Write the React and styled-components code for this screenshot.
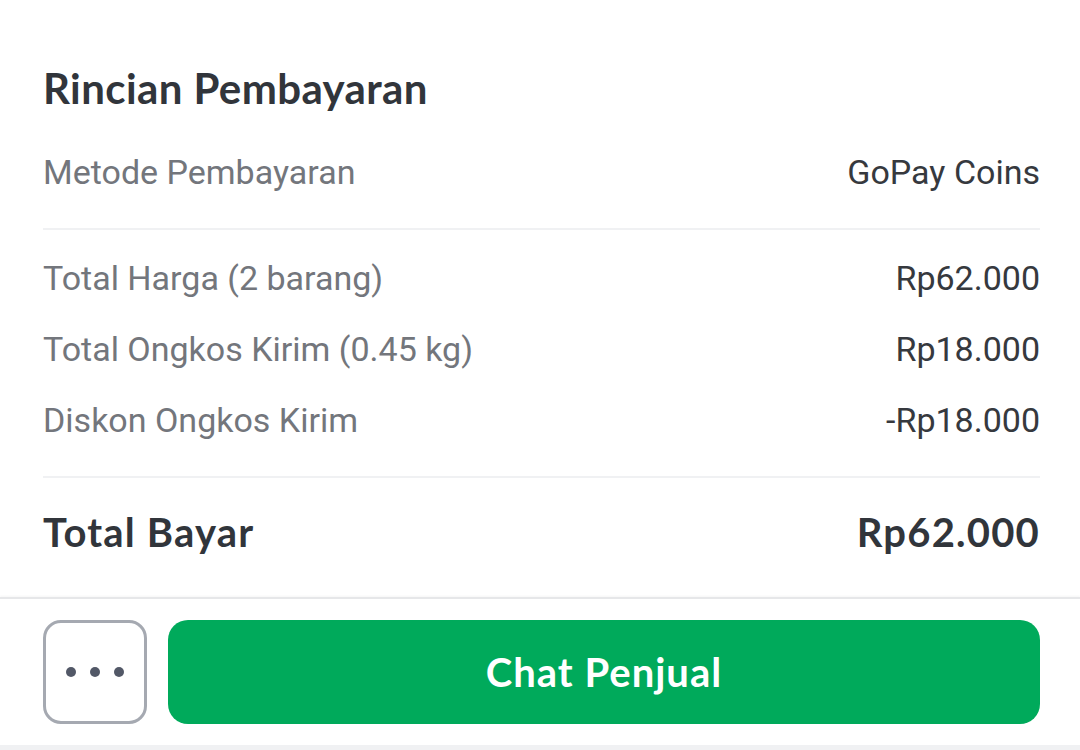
import React from 'react';
import styled, { createGlobalStyle } from 'styled-components';

const GlobalStyle = createGlobalStyle`
  html, body {
    margin: 0;
    padding: 0;
    background: #ffffff;
  }
  * { box-sizing: border-box; }
`;

const Page = styled.div`
  width: 1080px;
  height: 750px;
  display: flex;
  flex-direction: column;
  background: #ffffff;
  overflow: hidden;
`;

const Content = styled.div`
  padding: 0 40px 0 43px;
  display: flex;
  flex-direction: column;
`;

const Title = styled.h2`
  margin: 0;
  padding-top: 64px;
  line-height: 48px;
  font-family: Lato, "Noto Sans", sans-serif;
  font-weight: 700;
  font-size: 42px;
  letter-spacing: 0.4px;
  color: #31353b;
`;

const InfoRow = styled.div`
  height: 71px;
  margin-top: ${(p) => p.$gap || 0}px;
  display: flex;
  align-items: center;
  justify-content: space-between;
`;

const Label = styled.span`
  font-family: Roboto, "Liberation Sans", sans-serif;
  font-size: 34px;
  color: #73767c;
`;

const Value = styled.span`
  font-family: Roboto, "Liberation Sans", sans-serif;
  font-size: 34px;
  color: #36393e;
`;

const TotalText = styled.span`
  font-family: Lato, "Noto Sans", sans-serif;
  font-weight: 700;
  font-size: 40px;
  letter-spacing: 1.2px;
  color: #31353b;
`;

const Divider = styled.div`
  height: 2px;
  margin-top: 21px;
  background: #f0f1f3;
`;

const Footer = styled.div`
  margin-top: 30px;
  border-top: 2px solid #e6e7e9;
  box-shadow: 0 -1px 2px rgba(0, 0, 0, 0.04);
  padding: 21px 40px 21px 43px;
  display: flex;
  gap: 21px;
`;

const MoreButton = styled.button`
  width: 104px;
  height: 104px;
  flex-shrink: 0;
  border: 3px solid #a5a9b1;
  border-radius: 18px;
  background: #ffffff;
  display: flex;
  align-items: center;
  justify-content: center;
  gap: 14px;
  padding: 0;
`;

const Dot = styled.span`
  width: 10px;
  height: 10px;
  border-radius: 50%;
  background: #525867;
`;

const ChatButton = styled.button`
  flex: 1;
  height: 104px;
  border: none;
  border-radius: 20px;
  background: #00aa5b;
  color: #ffffff;
  font-family: Lato, "Noto Sans", sans-serif;
  font-weight: 700;
  font-size: 40px;
  letter-spacing: 1px;
`;

const BottomStrip = styled.div`
  flex: 1;
  background: #f0f1f3;
`;

const details = [
  { label: 'Total Harga (2 barang)', value: 'Rp62.000' },
  { label: 'Total Ongkos Kirim (0.45 kg)', value: 'Rp18.000' },
  { label: 'Diskon Ongkos Kirim', value: '-Rp18.000' },
];

export default function App() {
  return (
    <Page>
      <GlobalStyle />
      <Content>
        <Title>Rincian Pembayaran</Title>
        <InfoRow $gap={24}>
          <Label>Metode Pembayaran</Label>
          <Value>GoPay Coins</Value>
        </InfoRow>
        <Divider />
        {details.map((d, i) => (
          <InfoRow key={d.label} $gap={i === 0 ? 12 : 0}>
            <Label>{d.label}</Label>
            <Value>{d.value}</Value>
          </InfoRow>
        ))}
        <Divider />
        <InfoRow $gap={18}>
          <TotalText>Total Bayar</TotalText>
          <TotalText>Rp62.000</TotalText>
        </InfoRow>
      </Content>
      <Footer>
        <MoreButton aria-label="Lainnya">
          <Dot />
          <Dot />
          <Dot />
        </MoreButton>
        <ChatButton>Chat Penjual</ChatButton>
      </Footer>
      <BottomStrip />
    </Page>
  );
}
